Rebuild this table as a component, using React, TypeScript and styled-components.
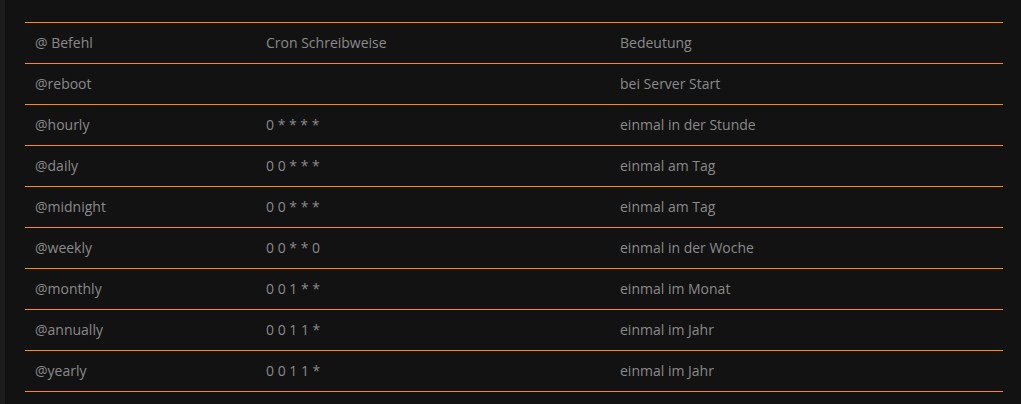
import React from "react";
import styled, { createGlobalStyle } from "styled-components";

const Global = createGlobalStyle`
  html, body { margin: 0; padding: 0; background: #121212; }
  body { font-family: "Open Sans", "Liberation Sans", sans-serif; }
`;

const Page = styled.div`
  min-height: 404px;
  box-sizing: border-box;
  border-left: 5px solid #1c1c1c;
  padding: 22px 18px 0 20px;
  background: #121212;
`;

const Table = styled.table`
  width: 978px;
  border-collapse: collapse;
  border-top: 1px solid #ff8c00;
`;

const Row = styled.tr`
  border-bottom: 1px solid #ff8c00;
`;

const Cell = styled.td<{ $w: number }>`
  width: ${(p) => p.$w}px;
  height: 41px;
  padding: 0 10px;
  box-sizing: border-box;
  font-size: 14px;
  color: #8a8a8a;
  text-align: left;
  vertical-align: middle;
  line-height: 20px;
`;

const rows: [string, string, string][] = [
  ["@ Befehl", "Cron Schreibweise", "Bedeutung"],
  ["@reboot", "", "bei Server Start"],
  ["@hourly", "0 * * * *", "einmal in der Stunde"],
  ["@daily", "0 0 * * *", "einmal am Tag"],
  ["@midnight", "0 0 * * *", "einmal am Tag"],
  ["@weekly", "0 0 * * 0", "einmal in der Woche"],
  ["@monthly", "0 0 1 * *", "einmal im Monat"],
  ["@annually", "0 0 1 1 *", "einmal im Jahr"],
  ["@yearly", "0 0 1 1 *", "einmal im Jahr"],
];

export default function App() {
  return (
    <>
      <Global />
      <Page>
        <Table>
          <tbody>
            {rows.map((r, i) => (
              <Row key={i}>
                <Cell $w={231}>{r[0]}</Cell>
                <Cell $w={354}>{r[1]}</Cell>
                <Cell $w={393}>{r[2]}</Cell>
              </Row>
            ))}
          </tbody>
        </Table>
      </Page>
    </>
  );
}
